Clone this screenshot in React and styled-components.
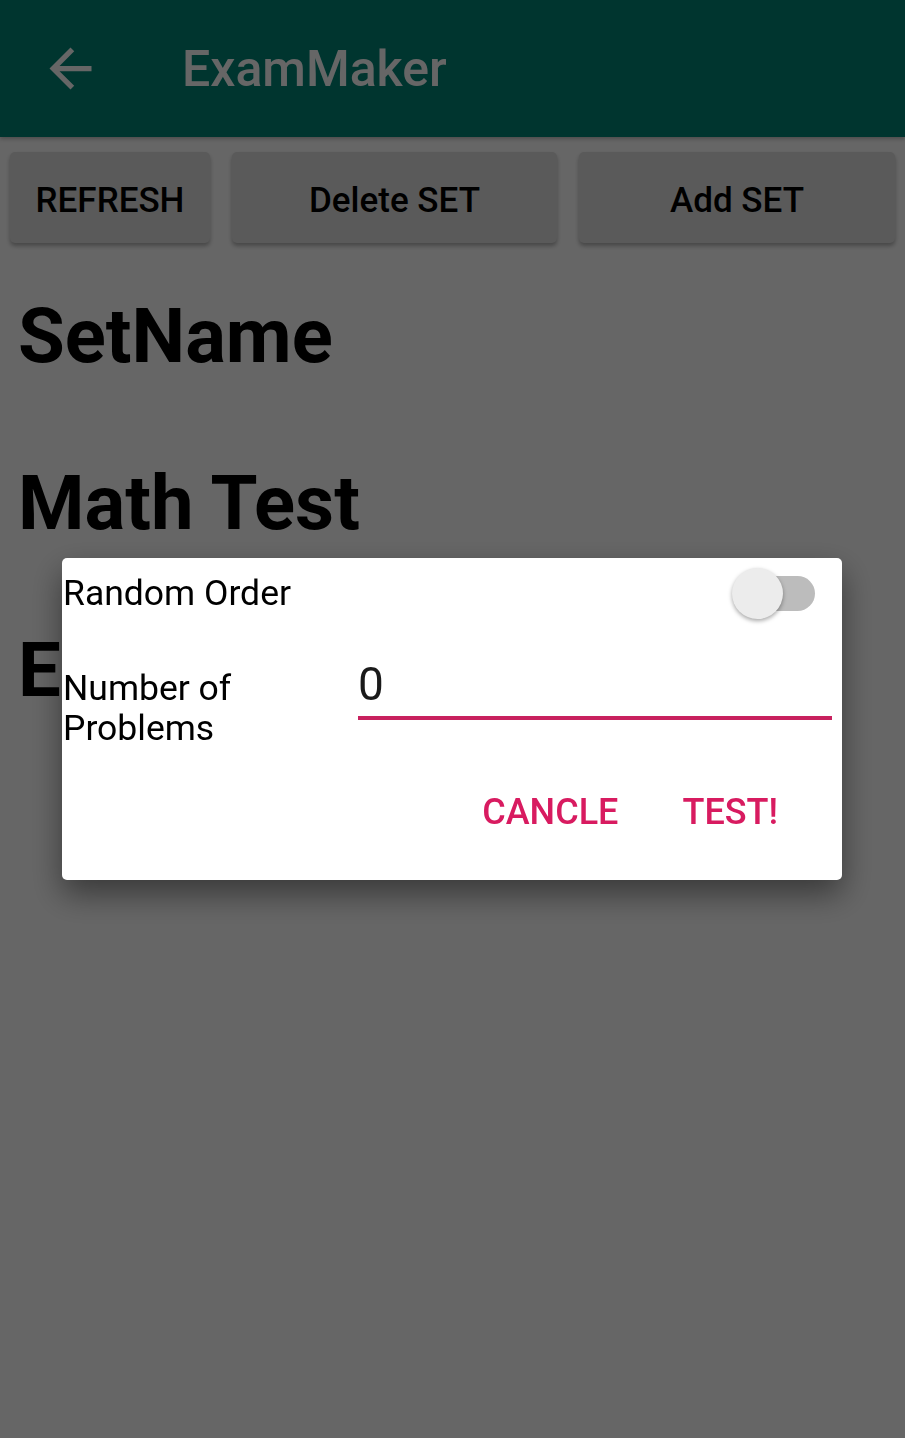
import React from 'react';
import styled, { createGlobalStyle } from 'styled-components';

const GlobalStyle = createGlobalStyle`
  html, body {
    margin: 0;
    padding: 0;
    background: #ffffff;
  }
  body {
    font-family: Roboto, "Noto Sans", "Liberation Sans", sans-serif;
  }
`;

const Page = styled.div`
  width: 905px;
  min-height: 1438px;
  background: #ffffff;
`;

const AppBar = styled.header`
  height: 137px;
  background: #008577;
  display: flex;
  align-items: center;
  box-shadow: 0 2px 4px rgba(0, 0, 0, 0.25);
  position: relative;
  z-index: 1;
`;

const BackButton = styled.button`
  width: 63px;
  height: 63px;
  margin-left: 39px;
  padding: 0;
  border: none;
  background: none;
  color: #ffffff;
  display: flex;
  align-items: center;
  justify-content: center;
  svg {
    width: 63px;
    height: 63px;
  }
`;

const Title = styled.h1`
  margin: 0 0 0 80px;
  font-size: 50px;
  font-weight: 500;
  color: #ffffff;
`;

const Toolbar = styled.div`
  display: grid;
  grid-template-columns: 200px 325px 1fr;
  gap: 22px;
  padding: 15px 10px 0 10px;
`;

const ToolButton = styled.button`
  height: 91px;
  border: none;
  border-radius: 5px;
  background: #e0e0e0;
  box-shadow: 0 3px 4px rgba(0, 0, 0, 0.3);
  font-family: Roboto, "Liberation Sans", sans-serif;
  font-size: 35px;
  font-weight: 500;
  color: #000000;
  padding: 5px 0 0 0;
`;

const SetList = styled.div`
  padding: 10px 0 0 18px;
`;

const SetRow = styled.div`
  height: 167px;
  line-height: 167px;
  font-size: 76px;
  font-weight: 700;
  color: #000000;
  white-space: nowrap;
`;

const Scrim = styled.div`
  position: fixed;
  inset: 0;
  background: rgba(0, 0, 0, 0.6);
  display: flex;
  align-items: center;
  justify-content: center;
  z-index: 10;
`;

const Dialog = styled.div`
  width: 780px;
  height: 322px;
  margin-right: 1px;
  box-sizing: border-box;
  background: #ffffff;
  border-radius: 5px;
  box-shadow: 0 14px 32px rgba(0, 0, 0, 0.45);
  padding-left: 1px;
  display: flex;
  flex-direction: column;
`;

const OptionRow = styled.div`
  height: 70px;
  display: flex;
  align-items: center;
  justify-content: space-between;
  padding-right: 27px;
`;

const Label = styled.div`
  font-size: 35.5px;
  color: #000000;
  line-height: ${(p) => (p.$wrap ? '40px' : 'normal')};
  ${(p) => p.$wrap && 'height: 72px; overflow: hidden; margin-top: 12px;'}
`;

const Switch = styled.div`
  position: relative;
  width: 89px;
  height: 51px;
`;

const Track = styled.div`
  position: absolute;
  left: 14px;
  right: 0;
  top: 8px;
  height: 35px;
  border-radius: 18px;
  background: #bcbcbc;
`;

const Thumb = styled.div`
  position: absolute;
  left: 6px;
  top: 0;
  width: 51px;
  height: 51px;
  border-radius: 50%;
  background: #ececec;
  box-shadow: 0 2px 4px rgba(0, 0, 0, 0.35);
`;

const FieldRow = styled.div`
  display: grid;
  grid-template-columns: 295px 474px;
  margin-top: 28px;
  align-items: start;
`;

const NumberInput = styled.div`
  font-size: 46px;
  line-height: 54px;
  color: #1a1a1a;
  padding: 1px 0 5px 0;
  border-bottom: 4px solid #c8215e;
`;

const Actions = styled.div`
  display: flex;
  justify-content: flex-end;
  margin-top: 42px;
  padding-right: 32px;
`;

const TextButton = styled.button`
  height: 60px;
  padding: 0 32px;
  border: none;
  background: none;
  font-family: Roboto, "Liberation Sans", sans-serif;
  font-size: 36px;
  font-weight: 500;
  color: #d81b60;
`;

const ArrowBack = () => (
  <svg viewBox="0 0 24 24" fill="currentColor">
    <path d="M20 11H7.83l5.59-5.59L12 4l-8 8 8 8 1.41-1.41L7.83 13H20v-2z" />
  </svg>
);

const sets = ['SetName', 'Math Test', 'English Test'];

const App = () => {
  return (
    <Page>
      <GlobalStyle />
      <AppBar>
        <BackButton>
          <ArrowBack />
        </BackButton>
        <Title>ExamMaker</Title>
      </AppBar>
      <Toolbar>
        <ToolButton>REFRESH</ToolButton>
        <ToolButton>Delete SET</ToolButton>
        <ToolButton>Add SET</ToolButton>
      </Toolbar>
      <SetList>
        {sets.map((name) => (
          <SetRow key={name}>{name}</SetRow>
        ))}
      </SetList>
      <Scrim>
        <Dialog>
          <OptionRow>
            <Label>Random Order</Label>
            <Switch>
              <Track />
              <Thumb />
            </Switch>
          </OptionRow>
          <FieldRow>
            <Label $wrap>Number of Problems</Label>
            <NumberInput>0</NumberInput>
          </FieldRow>
          <Actions>
            <TextButton>CANCLE</TextButton>
            <TextButton>TEST!</TextButton>
          </Actions>
        </Dialog>
      </Scrim>
    </Page>
  );
};

export default App;
